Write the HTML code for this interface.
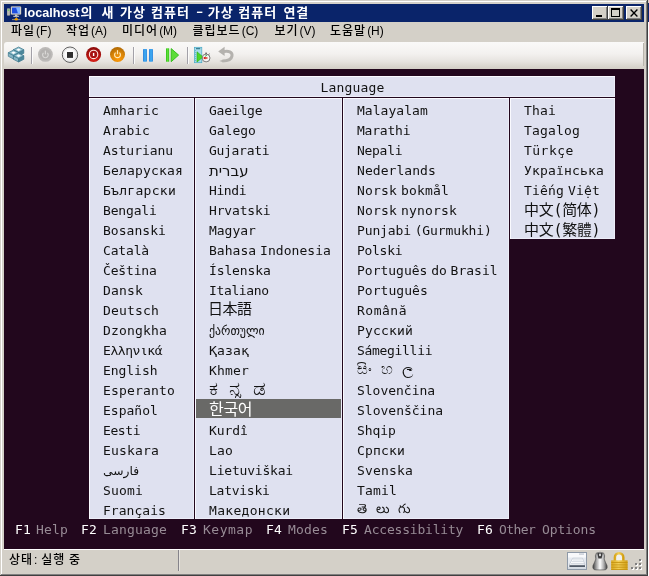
<!DOCTYPE html>
<html lang="ko"><head><meta charset="utf-8"><title>localhost의 새 가상 컴퓨터 - 가상 컴퓨터 연결</title>
<style>
html,body{margin:0;padding:0}
body{width:649px;height:576px;overflow:hidden;background:#d4d0c8;position:relative;font-family:"Liberation Sans","Noto Sans CJK KR",sans-serif}
div{position:absolute;box-sizing:border-box}
#win{left:0;top:0;width:648px;height:576px;background:#d4d0c8;will-change:transform}
.e{background:#fff}
#title{left:4px;top:4px;width:640px;height:18px;background:#0a246a}
#ttext{left:0;top:0;width:560px;height:18px;color:#fff;font-weight:bold;white-space:nowrap}
.tw{position:absolute;top:0;height:18px;line-height:18px;white-space:nowrap}
.tl{font-family:"Liberation Sans",sans-serif;font-size:13px;transform:scaleX(.97);transform-origin:0 0}
.td{transform:scaleX(1.5);transform-origin:0 0}
.tk{font-family:"Noto Sans CJK KR",sans-serif;font-size:13px;letter-spacing:1px;top:-1px}
.cb{top:2px;width:16px;height:14px;background:#d4d0c8;box-shadow:inset -1px -1px 0 #404040,inset 1px 1px 0 #fff,inset -2px -2px 0 #808080}
.mi{top:24px;height:15px;line-height:15px;font-size:12px;color:#000;white-space:nowrap}
.h{letter-spacing:1px;margin-right:1px;font-weight:500}
#tb{left:4px;top:42px;width:640px;height:26px;border-radius:3px 0 0 0;background:linear-gradient(#faf9f8 0%,#f3f1ef 45%,#e6e3df 75%,#d8d4cd 95%,#d4d0c8 100%)}
.sep{top:47px;width:1px;height:17px;background:#a3a1a8;box-shadow:1px 0 0 #fbfbfa}
#vm{left:4px;top:69px;width:640px;height:480px;background:#22071d;overflow:hidden}
#vm div{font-family:"DejaVu Sans Mono","DejaVu Sans",monospace}
#panel{left:85px;top:7px;width:526px;height:21px;background:#dfe1f0;box-shadow:inset 1px 1px 0 #fafaff,inset -1px -1px 0 #ecedf8}
.col{background:#dfe1f0;box-shadow:inset 1px 1px 0 #fafaff,inset -1px -1px 0 #ecedf8;top:29px}
.it{height:20px;line-height:20px;font-size:13px;letter-spacing:0.17px;word-spacing:-4px;color:#121212;white-space:nowrap;overflow:visible;margin-top:-69px;margin-left:-4px}
.cjk{font-size:15px;letter-spacing:-0.5px}
#vm .cjk.jp{font-family:"DejaVu Sans Mono","Noto Sans CJK JP",sans-serif;margin-top:-71px;margin-left:-5px}
#vm .cjk.kr{font-family:"DejaVu Sans Mono","Noto Sans CJK KR",sans-serif;font-size:16px;letter-spacing:-0.3px;margin-top:-70px}
#vm .cjk.sc{font-family:"DejaVu Sans Mono","Noto Sans CJK SC",sans-serif;margin-top:-70px}
#vm .cjk.tc{font-family:"DejaVu Sans Mono","Noto Sans CJK TC",sans-serif;margin-top:-70px}
#vm .alt{font-family:"DejaVu Sans","DejaVu Sans Mono",sans-serif;letter-spacing:0}
.sel{color:#fff}
#selbg{left:192px;top:330px;width:145px;height:19px;background:#696967}
.fk,.fl{top:451px;height:20px;line-height:20px;font-size:13px;letter-spacing:0.17px;word-spacing:-5px;white-space:nowrap;margin-left:-4px}
.fk{color:#fff}
.fl{color:#978b95}
#status{left:9px;top:553px;width:160px;height:15px;line-height:15px;font-size:12px;color:#000;white-space:nowrap}
.sw{position:absolute;top:0;white-space:nowrap}
</style></head><body>
<div id="win">
<div class="e" style="left:1px;top:1px;width:645px;height:1px"></div>
<div class="e" style="left:1px;top:1px;width:1px;height:573px"></div>
<div style="left:646px;top:1px;width:1px;height:574px;background:#808080"></div>
<div style="left:647px;top:0;width:1px;height:576px;background:#404040"></div>
<div style="left:1px;top:574px;width:646px;height:1px;background:#808080"></div>
<div style="left:0;top:575px;width:648px;height:1px;background:#404040"></div>
<div id="title">
<svg style="position:absolute;left:3px;top:2px" width="15" height="15" viewBox="0 0 15 15">
<rect x="0" y="2.5" width="3" height="7" rx="0.8" fill="#b9b9b4" stroke="#8b8b86" stroke-width="0.5"/>
<rect x="0.7" y="3.6" width="1.6" height="1" fill="#3fd23f"/>
<rect x="4" y="0.5" width="10" height="8" rx="0.8" fill="#e9e7e0" stroke="#9a9890" stroke-width="0.5"/>
<rect x="5" y="1.5" width="8" height="6" fill="#1f4fe0"/>
<polygon points="9,1.5 13,1.5 13,7.5 11,7.5" fill="#7fb4ff"/>
<rect x="8" y="8.5" width="2.4" height="1.6" fill="#c9c7c0"/>
<rect x="6.3" y="9.8" width="5.6" height="1" fill="#deddd6"/>
<rect x="8.9" y="10.8" width="0.8" height="2" fill="#9a9890"/>
<rect x="5" y="13.2" width="8.5" height="0.9" fill="#9a9890"/>
<ellipse cx="9.3" cy="13.3" rx="1.7" ry="1.2" fill="#f0a000"/>
</svg>
<div id="ttext"><span class="tw tl" style="left:20.0px">localhost</span><span class="tw tk" style="left:76.6px">의</span><span class="tw tk" style="left:97.6px">새</span><span class="tw tk" style="left:116.0px">가상</span><span class="tw tk" style="left:147.0px">컴퓨터</span><span class="tw tk td" style="left:191.8px">-</span><span class="tw tk" style="left:203.7px">가상</span><span class="tw tk" style="left:234.3px">컴퓨터</span><span class="tw tk" style="left:279.4px">연결</span></div>
<div class="cb" style="left:588px"><svg width="16" height="14" style="position:absolute;left:0;top:0"><rect x="4" y="9" width="6" height="2" fill="#000"/></svg></div>
<div class="cb" style="left:604px"><svg width="16" height="14" style="position:absolute;left:0;top:0"><rect x="3.5" y="3.5" width="8" height="7" fill="none" stroke="#000" stroke-width="1"/><rect x="3" y="2" width="9" height="2" fill="#000"/></svg></div>
<div class="cb" style="left:622px"><svg width="16" height="14" style="position:absolute;left:0;top:0"><path d="M4.6 3.6 L11.4 10.4 M11.4 3.6 L4.6 10.4" stroke="#000" stroke-width="1.35" fill="none"/></svg></div>
</div>
<div class="mi" style="left:11px"><span class="h">파일</span>(F)</div>
<div class="mi" style="left:66px"><span class="h">작업</span>(A)</div>
<div class="mi" style="left:122px"><span class="h">미디어</span>(M)</div>
<div class="mi" style="left:192.5px"><span class="h">클립보드</span>(C)</div>
<div class="mi" style="left:274.5px"><span class="h">보기</span>(V)</div>
<div class="mi" style="left:330px"><span class="h">도움말</span>(H)</div>
<div id="tb"></div>
<svg style="position:absolute;left:0;top:42px" width="649" height="27" viewBox="0 42 649 27">
<defs>
<radialGradient id="gr" cx="0.5" cy="0.75" r="0.7"><stop offset="0" stop-color="#e8261c"/><stop offset="0.55" stop-color="#b81410"/><stop offset="1" stop-color="#8e0c0c"/></radialGradient>
<radialGradient id="go" cx="0.55" cy="0.8" r="0.75"><stop offset="0" stop-color="#ff9a08"/><stop offset="0.6" stop-color="#d88408"/><stop offset="1" stop-color="#b46c04"/></radialGradient>
<radialGradient id="gs" cx="0.4" cy="0.35" r="0.75"><stop offset="0" stop-color="#ffffff"/><stop offset="0.7" stop-color="#f4f4f4"/><stop offset="1" stop-color="#bdbdbd"/></radialGradient>
<linearGradient id="gb" x1="0" x2="1" y1="0" y2="0"><stop offset="0" stop-color="#1672d6"/><stop offset="0.5" stop-color="#48b4f6"/><stop offset="1" stop-color="#1a7cdc"/></linearGradient>
<linearGradient id="gg" x1="0" x2="1" y1="0" y2="0"><stop offset="0" stop-color="#2cc014"/><stop offset="0.5" stop-color="#62e03c"/><stop offset="1" stop-color="#30c418"/></linearGradient>
</defs>
<polygon points="13.4,49.7 18.6,52.4 18.6,56.0 13.4,53.3" fill="#86b4c4" stroke="#39768a" stroke-width="0.7" stroke-linejoin="round"/><polygon points="18.6,52.4 23.8,49.7 23.8,53.3 18.6,56.0" fill="#4b879b" stroke="#39768a" stroke-width="0.7" stroke-linejoin="round"/><polygon points="13.4,49.7 18.6,47.0 23.8,49.7 18.6,52.4" fill="#8fbfce" stroke="#39768a" stroke-width="0.7" stroke-linejoin="round"/><polygon points="16.3,49.7 18.6,48.4 20.9,49.7 18.6,51.0" fill="#ffffff"/><polygon points="8.3,52.7 13.5,55.4 13.5,59.0 8.3,56.3" fill="#86b4c4" stroke="#39768a" stroke-width="0.7" stroke-linejoin="round"/><polygon points="13.5,55.4 18.7,52.7 18.7,56.3 13.5,59.0" fill="#4b879b" stroke="#39768a" stroke-width="0.7" stroke-linejoin="round"/><polygon points="8.3,52.7 13.5,50.0 18.7,52.7 13.5,55.4" fill="#8fbfce" stroke="#39768a" stroke-width="0.7" stroke-linejoin="round"/><polygon points="11.2,52.7 13.5,51.4 15.8,52.7 13.5,54.0" fill="#ffffff"/><polygon points="13.4,55.7 18.6,58.4 18.6,62.0 13.4,59.3" fill="#86b4c4" stroke="#39768a" stroke-width="0.7" stroke-linejoin="round"/><polygon points="18.6,58.4 23.8,55.7 23.8,59.3 18.6,62.0" fill="#4b879b" stroke="#39768a" stroke-width="0.7" stroke-linejoin="round"/><polygon points="13.4,55.7 18.6,53.0 23.8,55.7 18.6,58.4" fill="#8fbfce" stroke="#39768a" stroke-width="0.7" stroke-linejoin="round"/><polygon points="16.3,55.7 18.6,54.4 20.9,55.7 18.6,57.0" fill="#ffffff"/>
<!-- power off (disabled) -->
<circle cx="45.4" cy="54.4" r="7.4" fill="#bcbab8"/>
<circle cx="45.4" cy="54.4" r="5.6" fill="#b4b2b0"/>
<path d="M43.5 52.9 A2.8 2.8 0 1 0 47.3 52.9" fill="none" stroke="#d9d8d6" stroke-width="1.2"/>
<rect x="44.8" y="50.6" width="1.2" height="3.8" fill="#d9d8d6"/>
<!-- stop -->
<circle cx="70" cy="54.7" r="7.7" fill="url(#gs)" stroke="#5e5e5e" stroke-width="1"/>
<circle cx="70" cy="54.7" r="6.4" fill="none" stroke="#e4e4e4" stroke-width="0.8"/>
<rect x="67" y="52" width="6" height="5.9" fill="#2e2e2e"/>
<!-- shutdown red -->
<circle cx="93.6" cy="54.5" r="7.5" fill="url(#gr)"/>
<circle cx="93.6" cy="54.4" r="4.2" fill="#a81010" stroke="#fbe4e0" stroke-width="1.1"/>
<rect x="92.9" y="52.9" width="1.4" height="3.1" fill="#fff"/>
<!-- save orange -->
<circle cx="117.5" cy="54.5" r="7.5" fill="url(#go)"/>
<path d="M115.6 52.6 A2.9 2.9 0 1 0 119.4 52.6" fill="none" stroke="#ffe9b8" stroke-width="1.2"/>
<rect x="116.9" y="50.2" width="1.2" height="4" fill="#ffe9b8"/>
<!-- pause -->
<rect x="143.1" y="49" width="3.8" height="12.7" rx="0.7" fill="url(#gb)"/>
<rect x="149.1" y="49" width="3.8" height="12.7" rx="0.7" fill="url(#gb)"/>
<!-- resume -->
<rect x="166" y="48.3" width="3.2" height="13.4" rx="0.5" fill="url(#gg)"/>
<polygon points="171.2,48.6 178.6,55.1 171.2,61.7" fill="#5cdc38" stroke="#2cbc14" stroke-width="0.9" stroke-linejoin="round"/>
<!-- snapshot -->
<rect x="194.4" y="47.3" width="7.4" height="15.4" fill="#a6dcea" stroke="#48a8c4" stroke-width="0.7"/>
<rect x="196" y="48.2" width="4.2" height="1" fill="#236a80"/>
<g fill="#48a8c4"><rect x="195.2" y="50" width="0.8" height="0.8"/><rect x="195.2" y="52" width="0.8" height="0.8"/><rect x="195.2" y="54" width="0.8" height="0.8"/><rect x="195.2" y="56" width="0.8" height="0.8"/><rect x="195.2" y="58" width="0.8" height="0.8"/><rect x="195.2" y="60" width="0.8" height="0.8"/></g>
<polygon points="197,51.8 203,57 197,62" fill="#4cd828" stroke="#2aac12" stroke-width="0.6"/>
<circle cx="206.1" cy="58" r="3.9" fill="#f6f6f6" stroke="#6e6e6e" stroke-width="0.9"/>
<rect x="205.2" y="52.6" width="1.8" height="1.4" fill="#6e6e6e"/>
<path d="M208.6 54.6 L209.6 53.8" stroke="#555" stroke-width="0.9"/>
<path d="M207.5 58 L203.8 58" stroke="#d81c10" stroke-width="1.3"/>
<polygon points="203.3,58 205.4,56.6 205.4,59.4" fill="#d81c10"/>
<path d="M205.2 56.2 L206.8 55.4" stroke="#2cae3c" stroke-width="1"/>
<!-- revert -->
<path d="M223.5 51.6 C228.5 50.4 232.6 52 232 56 C231.3 60.4 226.5 60.9 222.5 60.9" fill="none" stroke="#b4b2ae" stroke-width="3"/>
<path d="M223 59.7 L219.4 60.9 L223 62.2 Z" fill="#b4b2ae"/>
<polygon points="218.2,51.4 224.6,46.8 224.6,55.9" fill="#b4b2ae"/>
</svg>
<div class="sep" style="left:31px"></div>
<div class="sep" style="left:133px"></div>
<div class="sep" style="left:187px"></div>
<div style="left:643px;top:43px;width:1px;height:23px;background:#b9b5ad"></div>
<div id="vm">
<div id="panel"></div>
<div class="it" style="left:320.5px;top:78px">Language</div>
<div class="col" style="left:85px;width:105px;height:421px"></div>
<div class="col" style="left:191px;width:147px;height:421px"></div>
<div class="col" style="left:339px;width:166px;height:421px"></div>
<div class="col" style="left:506px;width:105px;height:141px"></div>
<div id="selbg"></div>
<div class="it" style="left:103px;top:101px;">Amharic</div>
<div class="it" style="left:103px;top:121px;;letter-spacing:-0.03px">Arabic</div>
<div class="it" style="left:103px;top:141px;;letter-spacing:-0.04px">Asturianu</div>
<div class="it" style="left:103px;top:161px;">Беларуская</div>
<div class="it" style="left:103px;top:181px;;letter-spacing:0.29px">Български</div>
<div class="it" style="left:103px;top:201px;;letter-spacing:-0.16px">Bengali</div>
<div class="it" style="left:103px;top:221px;;letter-spacing:0.03px">Bosanski</div>
<div class="it" style="left:103px;top:241px;;letter-spacing:-0.17px">Català</div>
<div class="it" style="left:103px;top:261px;;letter-spacing:-0.16px">Čeština</div>
<div class="it" style="left:103px;top:281px;">Dansk</div>
<div class="it" style="left:103px;top:301px;">Deutsch</div>
<div class="it" style="left:103px;top:321px;">Dzongkha</div>
<div class="it" style="left:103px;top:341px;;letter-spacing:-0.44px">Ελληνικά</div>
<div class="it" style="left:103px;top:361px;;letter-spacing:-0.05px">English</div>
<div class="it" style="left:103px;top:381px;">Esperanto</div>
<div class="it" style="left:103px;top:401px;;letter-spacing:0.00px">Español</div>
<div class="it" style="left:103px;top:421px;;letter-spacing:-0.41px">Eesti</div>
<div class="it" style="left:103px;top:441px;">Euskara</div>
<div class="it alt" style="left:103px;top:461px;font-size:12.3px">فارسی</div>
<div class="it" style="left:103px;top:481px;">Suomi</div>
<div class="it" style="left:103px;top:501px;;letter-spacing:0.03px">Français</div>
<div class="it" style="left:209px;top:101px;;letter-spacing:-0.21px">Gaeilge</div>
<div class="it" style="left:209px;top:121px;;letter-spacing:-0.03px">Galego</div>
<div class="it" style="left:209px;top:141px;;letter-spacing:-0.30px">Gujarati</div>
<div class="it alt" style="left:209px;top:161px;font-size:14.9px">עברית</div>
<div class="it" style="left:209px;top:181px;;letter-spacing:-0.41px">Hindi</div>
<div class="it" style="left:209px;top:201px;;letter-spacing:-0.16px">Hrvatski</div>
<div class="it" style="left:209px;top:221px;;letter-spacing:-0.03px">Magyar</div>
<div class="it" style="left:209px;top:241px;;letter-spacing:0.04px">Bahasa Indonesia</div>
<div class="it" style="left:209px;top:261px;;letter-spacing:-0.12px">Íslenska</div>
<div class="it" style="left:209px;top:281px;;letter-spacing:-0.36px">Italiano</div>
<div class="it cjk jp" style="left:209px;top:301px;">日本語</div>
<div class="it alt" style="left:209px;top:321px;font-size:11.8px">ქართული</div>
<div class="it" style="left:209px;top:341px;">Қазақ</div>
<div class="it" style="left:209px;top:361px;">Khmer</div>
<div class="it alt" style="left:209px;top:381px;font-size:20px;letter-spacing:10px;margin-top:-72px;overflow:hidden;width:70px;letter-spacing:10.50px">ಕನ್ನಡ</div>
<div class="it cjk kr sel" style="left:209px;top:401px;">한국어</div>
<div class="it" style="left:209px;top:421px;;letter-spacing:-0.08px">Kurdî</div>
<div class="it" style="left:209px;top:441px;">Lao</div>
<div class="it" style="left:209px;top:461px;;letter-spacing:-0.20px">Lietuviškai</div>
<div class="it" style="left:209px;top:481px;;letter-spacing:-0.26px">Latviski</div>
<div class="it" style="left:209px;top:501px;;letter-spacing:0.31px">Македонски</div>
<div class="it" style="left:357px;top:101px;;letter-spacing:0.04px">Malayalam</div>
<div class="it" style="left:357px;top:121px;;letter-spacing:-0.21px">Marathi</div>
<div class="it" style="left:357px;top:141px;;letter-spacing:-0.29px">Nepali</div>
<div class="it" style="left:357px;top:161px;;letter-spacing:0.06px">Nederlands</div>
<div class="it" style="left:357px;top:181px;">Norsk bokmål</div>
<div class="it" style="left:357px;top:201px;">Norsk nynorsk</div>
<div class="it" style="left:357px;top:221px;;letter-spacing:-0.12px">Punjabi (Gurmukhi)</div>
<div class="it" style="left:357px;top:241px;;letter-spacing:-0.29px">Polski</div>
<div class="it" style="left:357px;top:261px;;letter-spacing:-0.01px">Português do Brasil</div>
<div class="it" style="left:357px;top:281px;;letter-spacing:0.04px">Português</div>
<div class="it" style="left:357px;top:301px;;letter-spacing:0.51px">Română</div>
<div class="it" style="left:357px;top:321px;">Русский</div>
<div class="it" style="left:357px;top:341px;;letter-spacing:-0.31px">Sámegillii</div>
<div class="it alt" style="left:357px;top:361px;font-size:14.5px;letter-spacing:7px;margin-top:-71px;letter-spacing:8.87px">සිංහල</div>
<div class="it" style="left:357px;top:381px;;letter-spacing:-0.02px">Slovenčina</div>
<div class="it" style="left:357px;top:401px;;letter-spacing:0.00px">Slovenščina</div>
<div class="it" style="left:357px;top:421px;;letter-spacing:-0.08px">Shqip</div>
<div class="it" style="left:357px;top:441px;">Српски</div>
<div class="it" style="left:357px;top:461px;">Svenska</div>
<div class="it" style="left:357px;top:481px;">Tamil</div>
<div class="it alt" style="left:357px;top:501px;font-size:13px;letter-spacing:8.5px;margin-top:-71px">తెలుగు</div>
<div class="it" style="left:524px;top:101px;">Thai</div>
<div class="it" style="left:524px;top:121px;">Tagalog</div>
<div class="it" style="left:524px;top:141px;;letter-spacing:0.47px">Türkçe</div>
<div class="it" style="left:524px;top:161px;">Українська</div>
<div class="it" style="left:524px;top:181px;">Tiếng Việt</div>
<div class="it cjk sc" style="left:524px;top:201px;;letter-spacing:-0.30px">中文(简体)</div>
<div class="it cjk tc" style="left:524px;top:221px;;letter-spacing:-0.30px">中文(繁體)</div>
<div class="fk" style="left:15px">F1</div><div class="fl" style="left:36px;letter-spacing:0.17px">Help</div>
<div class="fk" style="left:81px">F2</div><div class="fl" style="left:103px;letter-spacing:0.17px">Language</div>
<div class="fk" style="left:181px">F3</div><div class="fl" style="left:203px;letter-spacing:0.5px">Keymap</div>
<div class="fk" style="left:266px">F4</div><div class="fl" style="left:288px;letter-spacing:0.17px">Modes</div>
<div class="fk" style="left:342px">F5</div><div class="fl" style="left:364px;letter-spacing:-0.2px">Accessibility</div>
<div class="fk" style="left:477px">F6</div><div class="fl" style="left:499px;letter-spacing:-0.6px">Other</div><div class="fl" style="left:542px;letter-spacing:-0.13px">Options</div>
</div>
<div class="e" style="left:4px;top:549px;width:640px;height:1px"></div>
<div id="status"><span class="sw" style="left:0"><span class="h">상태</span>:</span><span class="sw" style="left:32.3px"><span class="h">실행</span></span><span class="sw" style="left:60px"><span class="h">중</span></span></div>
<div style="left:178px;top:550px;width:1px;height:21px;background:#85838a"></div>
<div style="left:179px;top:550px;width:1px;height:21px;background:#e6e3de"></div>
<svg style="position:absolute;left:565px;top:550px" width="80" height="24" viewBox="565 550 80 24">
<!-- keyboard -->
<defs>
<linearGradient id="gm" x1="0" x2="1" y1="0" y2="0"><stop offset="0" stop-color="#3a3a3a"/><stop offset="0.22" stop-color="#9a9a9a"/><stop offset="0.5" stop-color="#ffffff"/><stop offset="0.78" stop-color="#a8a8a8"/><stop offset="1" stop-color="#3a3a3a"/></linearGradient>
<linearGradient id="gl" x1="0" x2="1" y1="0" y2="0"><stop offset="0" stop-color="#d8a61c"/><stop offset="0.45" stop-color="#f2cf58"/><stop offset="1" stop-color="#d29f14"/></linearGradient>
</defs>
<rect x="567.5" y="552.5" width="19" height="17" fill="#e6eaf0" stroke="#8f9aa8" stroke-width="1"/>
<rect x="568" y="553" width="18" height="4.5" fill="#f8f9fb"/>
<rect x="579" y="553.6" width="5" height="0.9" fill="#aab4c0"/>
<polygon points="572.8,558.2 582.5,558.2 585,565 569.2,565" fill="#fdfdfe" stroke="#b4bcc8" stroke-width="0.6"/>
<g fill="#c4ccd6"><rect x="573" y="559.6" width="9.4" height="0.7"/><rect x="572" y="561.4" width="11.4" height="0.7"/><rect x="571" y="563.2" width="13.2" height="0.7"/></g>
<rect x="569.4" y="565.4" width="15.6" height="1.4" fill="#2c3644"/>
<rect x="568" y="567.2" width="18" height="1.8" fill="#d4dae2"/>
<!-- mouse -->
<path d="M596.4 553 Q600 551.5 603.6 553 Q605.4 555.6 604.2 559 Q605.2 562 607 565.4 Q608 569.8 604 569.9 L596 569.9 Q592 569.8 593 565.4 Q594.8 562 595.8 559 Q594.6 555.6 596.4 553 Z" fill="url(#gm)" stroke="#4a4a4a" stroke-width="0.6"/>
<path d="M597.2 553.2 Q600 552.4 602.8 553.2 L601.6 558.6 L598.4 558.6 Z" fill="#3c3c3c"/>
<rect x="599.2" y="553.4" width="1.6" height="2.8" rx="0.7" fill="#f4f4f4"/>
<!-- lock -->
<path d="M614.9 561 L614.9 557.4 A4.2 4.2 0 0 1 623.3 557.4 L623.3 561" fill="#f0f0ee" stroke="url(#gl)" stroke-width="2.5"/>
<rect x="611.2" y="560.3" width="16.4" height="9.7" fill="url(#gl)"/>
<g fill="#c4920e"><rect x="611.2" y="562.2" width="16.4" height="0.8"/><rect x="611.2" y="564.5" width="16.4" height="0.8"/><rect x="611.2" y="566.8" width="16.4" height="0.8"/><rect x="611.2" y="569.2" width="16.4" height="0.8"/></g>
<!-- grip -->
<g fill="#fff"><rect x="640" y="560" width="2" height="2"/><rect x="636" y="564" width="2" height="2"/><rect x="640" y="564" width="2" height="2"/><rect x="632" y="568" width="2" height="2"/><rect x="636" y="568" width="2" height="2"/><rect x="640" y="568" width="2" height="2"/></g>
<g fill="#808080"><rect x="639" y="559" width="2" height="2"/><rect x="635" y="563" width="2" height="2"/><rect x="639" y="563" width="2" height="2"/><rect x="631" y="567" width="2" height="2"/><rect x="635" y="567" width="2" height="2"/><rect x="639" y="567" width="2" height="2"/></g>
</svg>
</div>
<div style="left:648px;top:0;width:1px;height:3px;background:#d4d0c8"></div>
<div style="left:648px;top:3px;width:1px;height:19px;background:#0a246a"></div>
<div style="left:648px;top:22px;width:1px;height:554px;background:#fff"></div>
</body></html>
